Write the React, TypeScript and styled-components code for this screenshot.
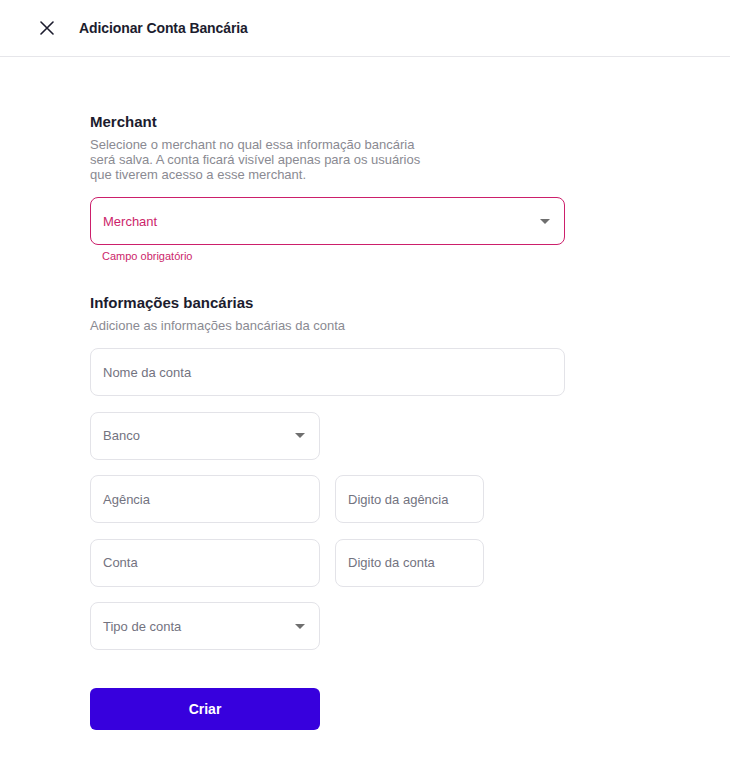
import React from "react";
import styled, { createGlobalStyle } from "styled-components";

const Global = createGlobalStyle`
  html, body { margin: 0; padding: 0; background: #fff; }
  body { font-family: "Liberation Sans", Arial, sans-serif; color: #1c1c2e; }
  * { box-sizing: border-box; }
`;

const Header = styled.header`
  height: 57px;
  display: flex;
  align-items: center;
  padding-left: 39px;
  gap: 24px;
  border-bottom: 1px solid #e6e6ea;
`;

const CloseButton = styled.button`
  width: 16px;
  height: 16px;
  padding: 0;
  border: none;
  background: none;
  display: flex;
  align-items: center;
  justify-content: center;
  cursor: pointer;
`;

const Title = styled.h1`
  margin: 0;
  font-size: 14px;
  font-weight: 700;
  letter-spacing: -0.1px;
  color: #1c1c2e;
`;

const Main = styled.main`
  padding: 56px 0 40px 90px;
  width: 565px;
`;

const Section = styled.section<{ $mt?: number }>`
  display: flex;
  flex-direction: column;
  margin-top: ${(p) => p.$mt ?? 0}px;
`;

const Heading = styled.h2`
  margin: 0;
  font-size: 15px;
  font-weight: 700;
  line-height: 18px;
  color: #1c1c2e;
`;

const Description = styled.p`
  margin: 6px 0 0;
  font-size: 13px;
  line-height: 15px;
  color: #8a8a92;
  max-width: 345px;
`;

const Fields = styled.div`
  display: flex;
  flex-direction: column;
  gap: 15.5px;
  margin-top: 15px;
`;

const Row = styled.div`
  display: flex;
  gap: 15px;
`;

const Field = styled.div<{ $w: number; $error?: boolean }>`
  width: ${(p) => p.$w}px;
  height: 48px;
  border: 1px solid ${(p) => (p.$error ? "#cc1f6b" : "#e3e3e8")};
  border-radius: 8px;
  display: flex;
  align-items: center;
  justify-content: space-between;
  padding: 0 12px;
  font-size: 13px;
  color: ${(p) => (p.$error ? "#cc1f6b" : "#73737f")};
  background: #fff;
`;

const Caret = styled.span`
  width: 0;
  height: 0;
  border-left: 5px solid transparent;
  border-right: 5px solid transparent;
  border-top: 5px solid #6f6f6f;
  margin-right: 2px;
`;

const ErrorText = styled.span`
  font-size: 11px;
  color: #cc1f6b;
  margin: 5px 0 0 12px;
`;

const SubmitButton = styled.button`
  margin-top: 38px;
  width: 230px;
  height: 42px;
  border: none;
  border-radius: 6px;
  background: #3700dd;
  color: #fff;
  font-family: inherit;
  font-size: 14px;
  font-weight: 700;
  cursor: pointer;
`;

const XIcon = () => (
  <svg width="14" height="14" viewBox="0 0 14 14" fill="none">
    <path d="M1 1L13 13M13 1L1 13" stroke="#1c1c2e" strokeWidth="1.6" strokeLinecap="round" />
  </svg>
);

export default function App() {
  return (
    <>
      <Global />
      <Header>
        <CloseButton aria-label="Fechar">
          <XIcon />
        </CloseButton>
        <Title>Adicionar Conta Bancária</Title>
      </Header>
      <Main>
        <Section>
          <Heading>Merchant</Heading>
          <Description>
            Selecione o merchant no qual essa informação bancária será salva. A conta ficará visível apenas para os usuários que tiverem acesso a esse merchant.
          </Description>
          <Fields>
            <Field $w={475} $error>
              Merchant
              <Caret />
            </Field>
          </Fields>
          <ErrorText>Campo obrigatório</ErrorText>
        </Section>
        <Section $mt={32}>
          <Heading>Informações bancárias</Heading>
          <Description>Adicione as informações bancárias da conta</Description>
          <Fields>
            <Field $w={475}>Nome da conta</Field>
            <Field $w={230}>
              Banco
              <Caret />
            </Field>
            <Row>
              <Field $w={230}>Agência</Field>
              <Field $w={149}>Digito da agência</Field>
            </Row>
            <Row>
              <Field $w={230}>Conta</Field>
              <Field $w={149}>Digito da conta</Field>
            </Row>
            <Field $w={230}>
              Tipo de conta
              <Caret />
            </Field>
          </Fields>
          <SubmitButton>Criar</SubmitButton>
        </Section>
      </Main>
    </>
  );
}
